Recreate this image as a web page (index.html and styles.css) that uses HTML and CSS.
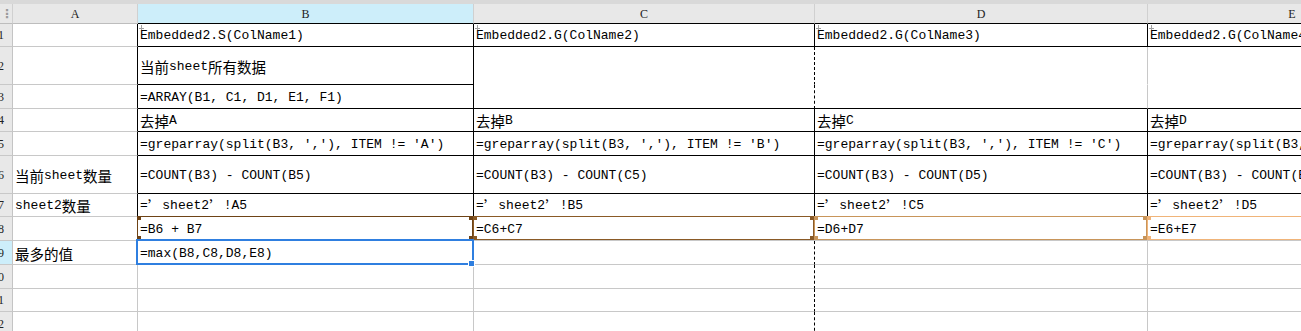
FILE: index.html
```html
<!DOCTYPE html>
<html lang="zh">
<head>
  <meta charset="UTF-8" />
  <title>Sheet</title>
  <link rel="stylesheet" href="styles.css">
</head>
<body>
  <div class="strip"></div>
  <div class="sheet">
    <!-- column headers -->
    <div class="c h corner">⋮</div>
    <div class="c h">A</div>
    <div class="c h sel kb">B</div>
    <div class="c h kb">C</div>
    <div class="c h kb">D</div>
    <div class="c h kb">E</div>

    <!-- 1 -->
    <div class="c rn"><span>1</span></div>
    <div class="c kr"></div>
    <div class="c kr kb mark">Embedded2.S(ColName1)</div>
    <div class="c kr kb mark">Embedded2.G(ColName2)</div>
    <div class="c kr kb mark">Embedded2.G(ColName3)</div>
    <div class="c kr kb mark">Embedded2.G(ColName4)</div>

    <!-- 2 -->
    <div class="c rn"><span>2</span></div>
    <div class="c kr"></div>
    <div class="c kr kb"><span class="zh">当前</span>sheet<span class="zh">所有数据</span></div>
    <div class="c dr nb"></div>
    <div class="c nb"></div>
    <div class="c nb"></div>

    <!-- 3 -->
    <div class="c rn"><span>3</span></div>
    <div class="c kr"></div>
    <div class="c kr kb">=ARRAY(B1, C1, D1, E1, F1)</div>
    <div class="c dr kb"></div>
    <div class="c kb"></div>
    <div class="c kb"></div>

    <!-- 4 -->
    <div class="c rn"><span>4</span></div>
    <div class="c kr"></div>
    <div class="c kr kb"><span class="zh">去掉</span>A</div>
    <div class="c kr kb"><span class="zh">去掉</span>B</div>
    <div class="c kr kb"><span class="zh">去掉</span>C</div>
    <div class="c kr kb"><span class="zh">去掉</span>D</div>

    <!-- 5 -->
    <div class="c rn"><span>5</span></div>
    <div class="c kr"></div>
    <div class="c kr kb">=greparray(split(B3, ','), ITEM != 'A')</div>
    <div class="c kr kb">=greparray(split(B3, ','), ITEM != 'B')</div>
    <div class="c kr kb">=greparray(split(B3, ','), ITEM != 'C')</div>
    <div class="c kr kb">=greparray(split(B3, ','), ITEM != 'D')</div>

    <!-- 6 -->
    <div class="c rn"><span>6</span></div>
    <div class="c kr"><span class="zh">当前</span>sheet<span class="zh">数量</span></div>
    <div class="c kr kb">=COUNT(B3) - COUNT(B5)</div>
    <div class="c kr kb">=COUNT(B3) - COUNT(C5)</div>
    <div class="c kr kb">=COUNT(B3) - COUNT(D5)</div>
    <div class="c kr kb">=COUNT(B3) - COUNT(E5)</div>

    <!-- 7 -->
    <div class="c rn"><span>7</span></div>
    <div class="c kr">sheet2<span class="zh">数量</span></div>
    <div class="c kr kb">=<span class="zh">’</span>sheet2<span class="zh">’</span>!A5</div>
    <div class="c kr kb">=<span class="zh">’</span>sheet2<span class="zh">’</span>!B5</div>
    <div class="c kr kb">=<span class="zh">’</span>sheet2<span class="zh">’</span>!C5</div>
    <div class="c kr kb">=<span class="zh">’</span>sheet2<span class="zh">’</span>!D5</div>

    <!-- 8 -->
    <div class="c rn"><span>8</span></div>
    <div class="c"></div>
    <div class="c ref ref-b">=B6 + B7</div>
    <div class="c ref ref-c">=C6+C7</div>
    <div class="c ref ref-d">=D6+D7</div>
    <div class="c ref ref-e">=E6+E7</div>

    <!-- 9 -->
    <div class="c rn sel"><span>9</span></div>
    <div class="c"><span class="zh">最多的值</span></div>
    <div class="c active">=max(B8,C8,D8,E8)</div>
    <div class="c dr"></div>
    <div class="c"></div>
    <div class="c"></div>

    <!-- 10 -->
    <div class="c rn"><span>10</span></div>
    <div class="c"></div>
    <div class="c"></div>
    <div class="c dr"></div>
    <div class="c"></div>
    <div class="c"></div>

    <!-- 11 -->
    <div class="c rn"><span>11</span></div>
    <div class="c"></div>
    <div class="c"></div>
    <div class="c dr"></div>
    <div class="c"></div>
    <div class="c"></div>

    <!-- 12 -->
    <div class="c rn"><span>12</span></div>
    <div class="c"></div>
    <div class="c"></div>
    <div class="c dr"></div>
    <div class="c"></div>
    <div class="c"></div>
  </div>
</body>
</html>
```

FILE: styles.css
```css
* {
  margin: 0;
  padding: 0;
  box-sizing: border-box;
}
body {
  background: #fff;
  overflow: hidden;
  width: 1301px;
  height: 331px;
}
.strip {
  height: 4px;
  background: #d9d9d9;
}
.sheet {
  display: grid;
  grid-template-columns: 13px 125px 336px 341px 333px 289px;
  grid-template-rows: 20px 23px 38px 24px 23px 24px 38px 23px 24px 24px 24px 23px 24px;
  font: 13px "Liberation Mono", "Noto Sans CJK SC", monospace;
  color: #000;
}
.c {
  position: relative;
  display: flex;
  align-items: center;
  padding: 1px 2px 0;
  white-space: nowrap;
  overflow: hidden;
  border-right: 1px solid #c8c8c8;
  border-bottom: 1px solid #c8c8c8;
}
.zh {
  font-family: "Noto Sans CJK SC", sans-serif;
  font-size: 14.5px;
}

/* headers */
.h {
  justify-content: center;
  background: #e8e8e8;
  font: 12px "Liberation Serif", serif;
  color: #222;
  border-right-color: #d0d0d0;
  border-bottom-color: #bdbdbd;
}
.corner {
  justify-content: flex-start;
  padding-left: 1px;
  color: #9a9a9a;
  font: bold 12px "DejaVu Sans", sans-serif;
}
.rn {
  justify-content: flex-end;
  padding: 1px 8px 0 0;
  background: #e8e8e8;
  font: 12px "Liberation Serif", serif;
  color: #222;
  border-right-color: #c4c4c4;
}
.sel {
  background: #cdeefa;
}

/* borders */
.kr { border-right-color: #000; }
.kb { border-bottom-color: #000; }
.dr { border-right: 1px dashed #000; }
.nb { border-bottom-color: #fff; }

/* little arrow on row 1 */
.mark::before {
  content: "";
  position: absolute;
  left: 1px;
  top: 1px;
  width: 6px;
  height: 6px;
  background:
    linear-gradient(#8a8a8a, #8a8a8a) 2px 0 / 1px 5px no-repeat,
    linear-gradient(#8a8a8a, #8a8a8a) 0 3px / 5px 1px no-repeat;
  opacity: 0.8;
}

/* formula reference highlights */
.ref { overflow: visible; }
.ref::after {
  content: "";
  position: absolute;
  top: -1px;
  left: -1px;
  right: 0;
  bottom: 0;
  border: 1px solid var(--rc);
  background:
    linear-gradient(var(--rc), var(--rc)) left top / 3px 3px no-repeat,
    linear-gradient(var(--rc), var(--rc)) right top / 3px 3px no-repeat,
    linear-gradient(var(--rc), var(--rc)) left bottom / 3px 3px no-repeat,
    linear-gradient(var(--rc), var(--rc)) right bottom / 3px 3px no-repeat;
  pointer-events: none;
}
.ref-b { --rc: #6e4316; }
.ref-c { --rc: #8a5a26; }
.ref-d { --rc: #c8955a; }
.ref-e { --rc: #f0b479; }

/* active cell */
.active { overflow: visible; z-index: 2; }
.active::after {
  content: "";
  position: absolute;
  top: -2px;
  left: -2px;
  right: -1px;
  bottom: -1px;
  border: 2px solid #2f7fe0;
}
.active::before {
  content: "";
  position: absolute;
  right: -2px;
  bottom: -3px;
  width: 5px;
  height: 5px;
  background: #2f7fe0;
  border: 1px solid #fff;
  z-index: 3;
}
```
